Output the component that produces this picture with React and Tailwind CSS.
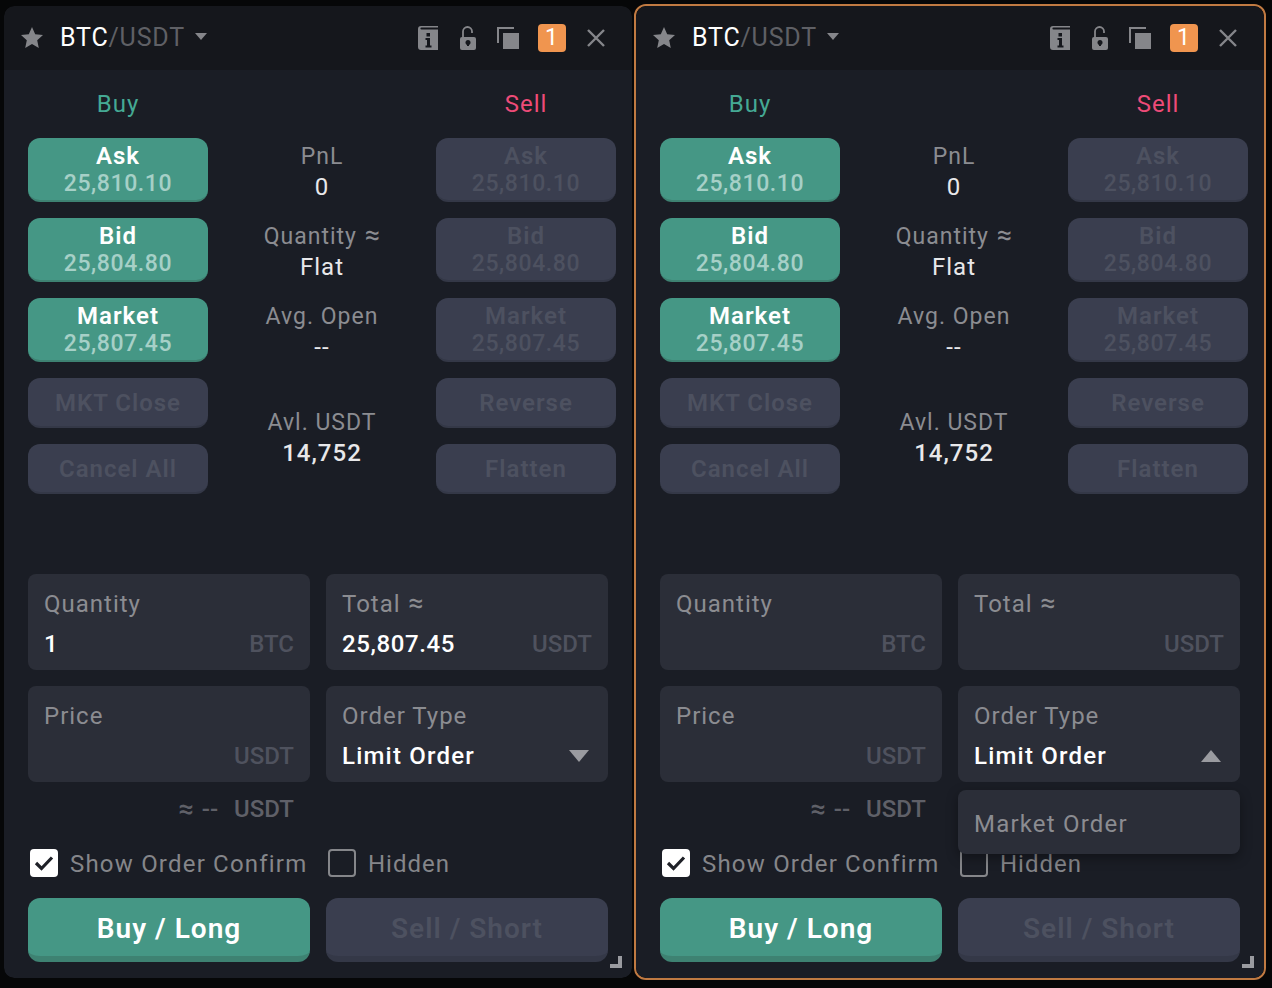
import { useState } from "react";

const Star = () => (
  <svg width="24" height="24" viewBox="0 0 24 24" className="fill-[#85868a]">
    <path d="M12 1l3.200 7.300 7.800.8-5.800 5.200 1.600 7.700L12 18.100 5.200 22l1.600-7.700L1 9.100l7.800-.8z" />
  </svg>
);

const BookIcon = () => (
  <svg width="20" height="24" viewBox="0 0 20 24" className="fill-[#85868a]">
    <path d="M3 0h17v1.500H3.500C2 1.500 2 3.500 3.500 3.500H20V24H3a3 3 0 0 1-3-3V3a3 3 0 0 1 3-3z" />
    <rect x="8.500" y="7" width="3.500" height="3.500" className="fill-[#15171c]" />
    <path d="M7.500 12H12v7.500h1.500V21.500h-6v-2H9V14H7.500z" className="fill-[#15171c]" />
  </svg>
);

const LockIcon = () => (
  <svg width="16" height="24" viewBox="0 0 16 24">
    <path d="M3 12V5.500a4.500 4.500 0 0 1 9 0v1.500" fill="none" stroke="#85868a" strokeWidth="1.800" />
    <rect x="0" y="11" width="16" height="13" rx="2" fill="#85868a" />
    <circle cx="8" cy="16.500" r="2.500" fill="#15171c" />
    <rect x="7" y="17" width="2" height="3" fill="#15171c" />
  </svg>
);

const CopyIcon = () => (
  <svg width="22" height="22" viewBox="0 0 22 22">
    <path d="M1 16V1h16" fill="none" stroke="#85868a" strokeWidth="2" />
    <rect x="6" y="6" width="16" height="16" fill="#85868a" />
  </svg>
);

const CloseIcon = () => (
  <svg width="20" height="20" viewBox="0 0 20 20">
    <path d="M2 2l16 16M18 2L2 18" stroke="#85868a" strokeWidth="2.400" />
  </svg>
);

const Approx = () => <span className="ml-2 text-[27px] leading-none tracking-[0px]">≈</span>;

function PriceButton({ label, value, on }) {
  return (
    <div
      className={`flex h-16 flex-col items-center justify-center rounded-xl border-b-2 pt-[1px] ${
        on ? "border-[#3e8272] bg-[#459785]" : "border-[#343847] bg-[#3a3e4f]"
      }`}
    >
      <div className={`text-[24px] leading-[28px] font-semibold ${on ? "text-white" : "text-[#4d5160]"}`}>{label}</div>
      <div className={`text-[23px] leading-[28px] font-medium tracking-[0.6px] ${on ? "text-[#a6d0c7]" : "text-[#4d5160]"}`}>{value}</div>
    </div>
  );
}

function ActionButton({ label }) {
  return (
    <div className="flex h-[50px] items-center justify-center rounded-xl border-b-2 border-[#343847] bg-[#3a3e4f] pt-[2px] text-[24px] font-semibold text-[#4d5160]">
      {label}
    </div>
  );
}

function Stat({ label, value, approx }) {
  return (
    <div className="flex h-16 flex-col items-center justify-center pt-[3px]">
      <div className="text-[23px] leading-[30px] text-[#8b8c91]">
        {label}
        {approx && <Approx />}
      </div>
      <div className="text-[24px] leading-[30px] text-[#e8e8ea]">{value}</div>
    </div>
  );
}

function Field({ label, approx, value, unit, numeric, children }) {
  return (
    <div className="h-24 rounded-lg bg-[#2b2e38] px-4 pt-[14px]">
      <div className="text-[24px] leading-[32px] text-[#8b8c91]">
        {label}
        {approx && <Approx />}
      </div>
      <div className="mt-2 flex h-8 items-center justify-between text-[24px]">
        <span className={`font-medium text-white ${numeric ? "tracking-[0.6px]" : "tracking-[1.2px]"}`}>{value}</span>
        {unit && <span className="font-medium tracking-[0px] text-[#4f525e]">{unit}</span>}
        {children}
      </div>
    </div>
  );
}

function Panel({ active }) {
  const [open] = useState(active);

  return (
    <div
      className={`h-[976px] w-[632px] overflow-hidden rounded-xl border-2 tracking-[1px] ${
        active ? "border-[#c07a42]" : "border-transparent"
      }`}
    >
      {/* header */}
      <div className="flex h-16 items-center rounded-t-[10px] bg-[#15171c] pr-[26px] pl-4">
        <Star />
        <div className="ml-[16px] text-[25px] tracking-[0.8px] text-white">
          BTC<span className="text-[#5f6065]">/USDT</span>
        </div>
        <div className="mb-[3px] ml-[10px] h-0 w-0 border-x-[6px] border-t-[7px] border-x-transparent border-t-[#85868a]" />
        <div className="ml-auto flex items-center">
          <BookIcon />
          <div className="ml-[22px]"><LockIcon /></div>
          <div className="ml-[21px]"><CopyIcon /></div>
          <div className="ml-[19px] flex h-7 w-7 items-center justify-center rounded bg-[#f0954f] text-[23px] text-white">1</div>
          <div className="ml-[20px]"><CloseIcon /></div>
        </div>
      </div>

      {/* body */}
      <div className="relative h-[908px] rounded-b-[10px] bg-[#1a1d25] pt-[20px] pr-4 pl-6">
        <div className="grid grid-cols-[180px_228px_180px] text-center text-[24px] leading-[28px]">
          <div className="text-[#45a994]">Buy</div>
          <div />
          <div className="text-[#ed4b78]">Sell</div>
        </div>

        <div className="mt-5 grid grid-cols-[180px_228px_180px]">
          <div className="flex flex-col gap-4">
            <PriceButton on label="Ask" value="25,810.10" />
            <PriceButton on label="Bid" value="25,804.80" />
            <PriceButton on label="Market" value="25,807.45" />
            <ActionButton label="MKT Close" />
            <ActionButton label="Cancel All" />
          </div>
          <div className="flex flex-col gap-4">
            <Stat label="PnL" value="0" />
            <Stat label="Quantity" approx value="Flat" />
            <Stat label="Avg. Open" value="--" />
            <div className="flex h-[116px] flex-col items-center justify-center pt-[3px]">
              <div className="text-[23px] leading-[30px] text-[#8b8c91]">Avl. USDT</div>
              <div className="text-[24px] leading-[30px] font-medium text-[#e8e8ea]">14,752</div>
            </div>
          </div>
          <div className="flex flex-col gap-4">
            <PriceButton label="Ask" value="25,810.10" />
            <PriceButton label="Bid" value="25,804.80" />
            <PriceButton label="Market" value="25,807.45" />
            <ActionButton label="Reverse" />
            <ActionButton label="Flatten" />
          </div>
        </div>

        {/* order form */}
        <div className="relative mt-20 w-[580px]">
          <div className="grid grid-cols-2 gap-4">
            <Field numeric label="Quantity" value={active ? "" : "1"} unit="BTC" />
            <Field numeric label="Total" approx value={active ? "" : "25,807.45"} unit="USDT" />
            <Field label="Price" value="" unit="USDT" />
            <Field label="Order Type" value="Limit Order">
              <div
                className={`mr-[3px] h-0 w-0 border-x-[10px] border-x-transparent ${
                  open ? "border-b-[12px] border-b-[#9a9ba0]" : "border-t-[12px] border-t-[#9a9ba0]"
                }`}
              />
            </Field>
          </div>

          <div className="mt-[10px] flex h-[34px] w-[282px] items-center justify-end pr-4 text-[24px] font-medium tracking-[0px] text-[#5f6068]">
            <span className="text-[27px] leading-none">≈</span>
            <span className="ml-[8px]">--</span>
            <span className="ml-4">USDT</span>
          </div>

          <div className="mt-[23px] flex h-7 items-center text-[24px] text-[#85868a]">
            <div className="ml-[2px] flex h-7 w-7 items-center justify-center rounded bg-white">
              <svg width="20" height="16" viewBox="0 0 20 16">
                <path d="M2 8l5.500 5.500L18 2.500" fill="none" stroke="#1f2128" strokeWidth="3.200" />
              </svg>
            </div>
            <span className="ml-3 w-[236px] pt-[2px] tracking-[1.2px] whitespace-nowrap">Show Order Confirm</span>
            <div className="ml-[22px] h-7 w-7 rounded border-2 border-[#85868a]" />
            <span className="ml-3 pt-[2px]">Hidden</span>
          </div>

          <div className="mt-[21px] grid grid-cols-2 gap-4">
            <div className="flex h-16 items-center justify-center rounded-xl border-b-[6px] border-[#3e8272] bg-[#459785] pt-1 text-[28px] font-semibold text-white">
              Buy / Long
            </div>
            <div className="flex h-16 items-center justify-center rounded-xl border-b-[6px] border-[#343847] bg-[#3a3e4f] pt-1 text-[28px] font-semibold text-[#4d5160]">
              Sell / Short
            </div>
          </div>

          {open && (
            <div className="absolute top-[216px] right-0 flex h-16 w-[282px] items-center rounded-lg bg-[#2b2e38] px-4 pt-1 text-[24px] tracking-[1.2px] text-[#8b8c91] shadow-[0_4px_12px_rgba(0,0,0,0.35)]">
              Market Order
            </div>
          )}
        </div>

        {/* resize handle */}
        <div className="absolute right-[10px] bottom-[10px] h-3 w-3 border-r-[4px] border-b-[4px] border-[#9a9ba0]" />
      </div>
    </div>
  );
}

export default function App() {
  return (
    <div className="flex h-[988px] w-[1272px] bg-[#060708] pt-1 pl-[2px] font-['Roboto',sans-serif]">
      <Panel />
      <Panel active />
    </div>
  );
}
